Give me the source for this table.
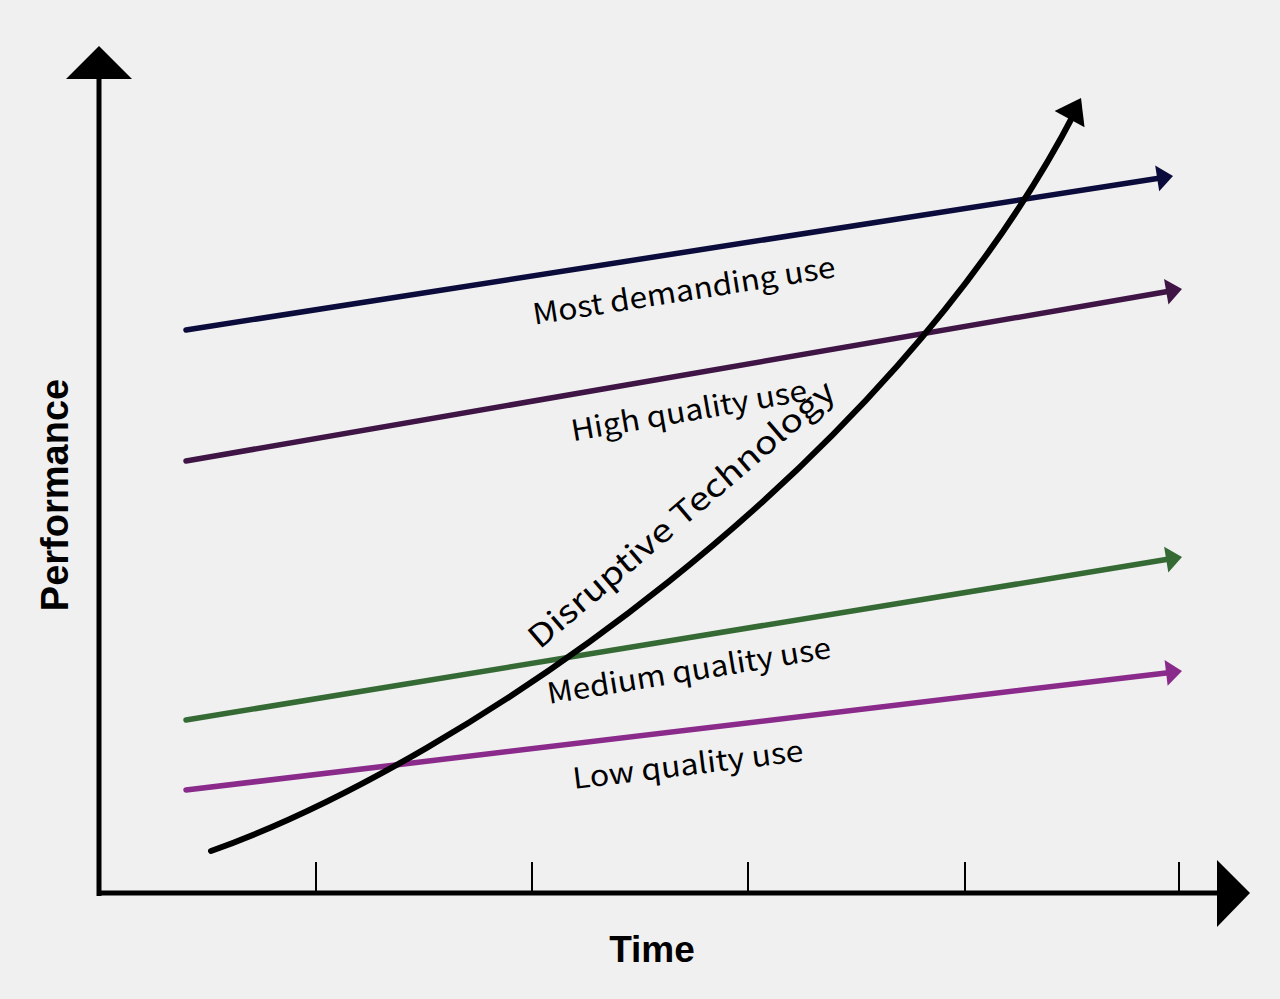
import React from 'react';

type Pt = [number, number];

// arrowhead triangle for a given tip and direction
const head = (tip: Pt, from: Pt, len: number, half: number) => {
  const dx = tip[0] - from[0];
  const dy = tip[1] - from[1];
  const d = Math.hypot(dx, dy);
  const ux = dx / d;
  const uy = dy / d;
  const bx = tip[0] - ux * len;
  const by = tip[1] - uy * len;
  const pts = [
    [tip[0], tip[1]],
    [bx - uy * half, by + ux * half],
    [bx + uy * half, by - ux * half],
  ];
  return { points: pts.map((p) => p.join(',')).join(' '), base: [bx, by] as Pt };
};

const uses = [
  { start: [186, 330] as Pt, tip: [1173, 176] as Pt, color: '#0b0b3c' },
  { start: [186, 461] as Pt, tip: [1182, 289] as Pt, color: '#3f1545' },
  { start: [186, 720] as Pt, tip: [1182, 557] as Pt, color: '#356a35' },
  { start: [186, 790] as Pt, tip: [1182, 671] as Pt, color: '#8a2a8a' },
];

const labels = [
  { text: 'Most demanding use', x: 684, y: 291, angle: -9, len: 306, size: 29 },
  { text: 'High quality use', x: 689, y: 411, angle: -9.8, len: 239, size: 29 },
  { text: 'Medium quality use', x: 689, y: 671, angle: -9.3, len: 287, size: 29 },
  { text: 'Low quality use', x: 688, y: 765, angle: -7, len: 232, size: 29 },
  { text: 'Disruptive Technology', x: 682, y: 515, angle: -40.5, len: 392, size: 31 },
];

const ticks = [316, 532, 748, 965, 1179];

export default function App() {
  const curveEnd: Pt = [1075, 112];
  const curveHead = head([1081, 98], [880, 470], 24, 17);

  return (
    <div className="w-full h-[999px] bg-[#f0f0f0] overflow-hidden">
      <svg width={1280} height={999} viewBox="0 0 1280 999" className="block">
        {/* axes */}
        <line x1={99} y1={78} x2={99} y2={896} stroke="#000" strokeWidth={5} />
        <line x1={97} y1={893} x2={1218} y2={893} stroke="#000" strokeWidth={5} />
        <polygon points="99,46 132,79 66,79" fill="#000" />
        <polygon points="1250,893 1217,860 1217,927" fill="#000" />
        {ticks.map((x) => (
          <line key={x} x1={x} y1={862} x2={x} y2={893} stroke="#000" strokeWidth={2} />
        ))}

        {/* use lines */}
        {uses.map((u) => {
          const h = head(u.tip, u.start, 16, 13);
          return (
            <g key={u.color}>
              <line
                x1={u.start[0]}
                y1={u.start[1]}
                x2={h.base[0]}
                y2={h.base[1]}
                stroke={u.color}
                strokeWidth={5.5}
                strokeLinecap="round"
              />
              <polygon points={h.points} fill={u.color} />
            </g>
          );
        })}

        {/* disruptive curve */}
        <path
          d={`M211 851 C 462 762, 890 470, ${curveEnd[0]} ${curveEnd[1]}`}
          fill="none"
          stroke="#000"
          strokeWidth={6}
          strokeLinecap="round"
        />
        <polygon points={curveHead.points} fill="#000" />

        {labels.map((l) => (
          <text
            key={l.text}
            transform={`translate(${l.x} ${l.y}) rotate(${l.angle})`}
            y={10}
            textAnchor="middle"
            textLength={l.len}
            lengthAdjust="spacingAndGlyphs"
            fontSize={l.size}
            fill="#000"
            className="font-['Noto_Sans_CJK_JP','Noto_Sans',sans-serif]"
          >
            {l.text}
          </text>
        ))}

        <text
          transform="translate(68 495) rotate(-90)"
          textAnchor="middle"
          fontSize={38}
          fontWeight={700}
          fill="#000"
          className="font-['Liberation_Sans',Arial,sans-serif]"
        >
          Performance
        </text>
        <text
          x={652}
          y={962}
          textAnchor="middle"
          fontSize={37}
          fontWeight={700}
          fill="#000"
          className="font-['Liberation_Sans',Arial,sans-serif]"
        >
          Time
        </text>
      </svg>
    </div>
  );
}
